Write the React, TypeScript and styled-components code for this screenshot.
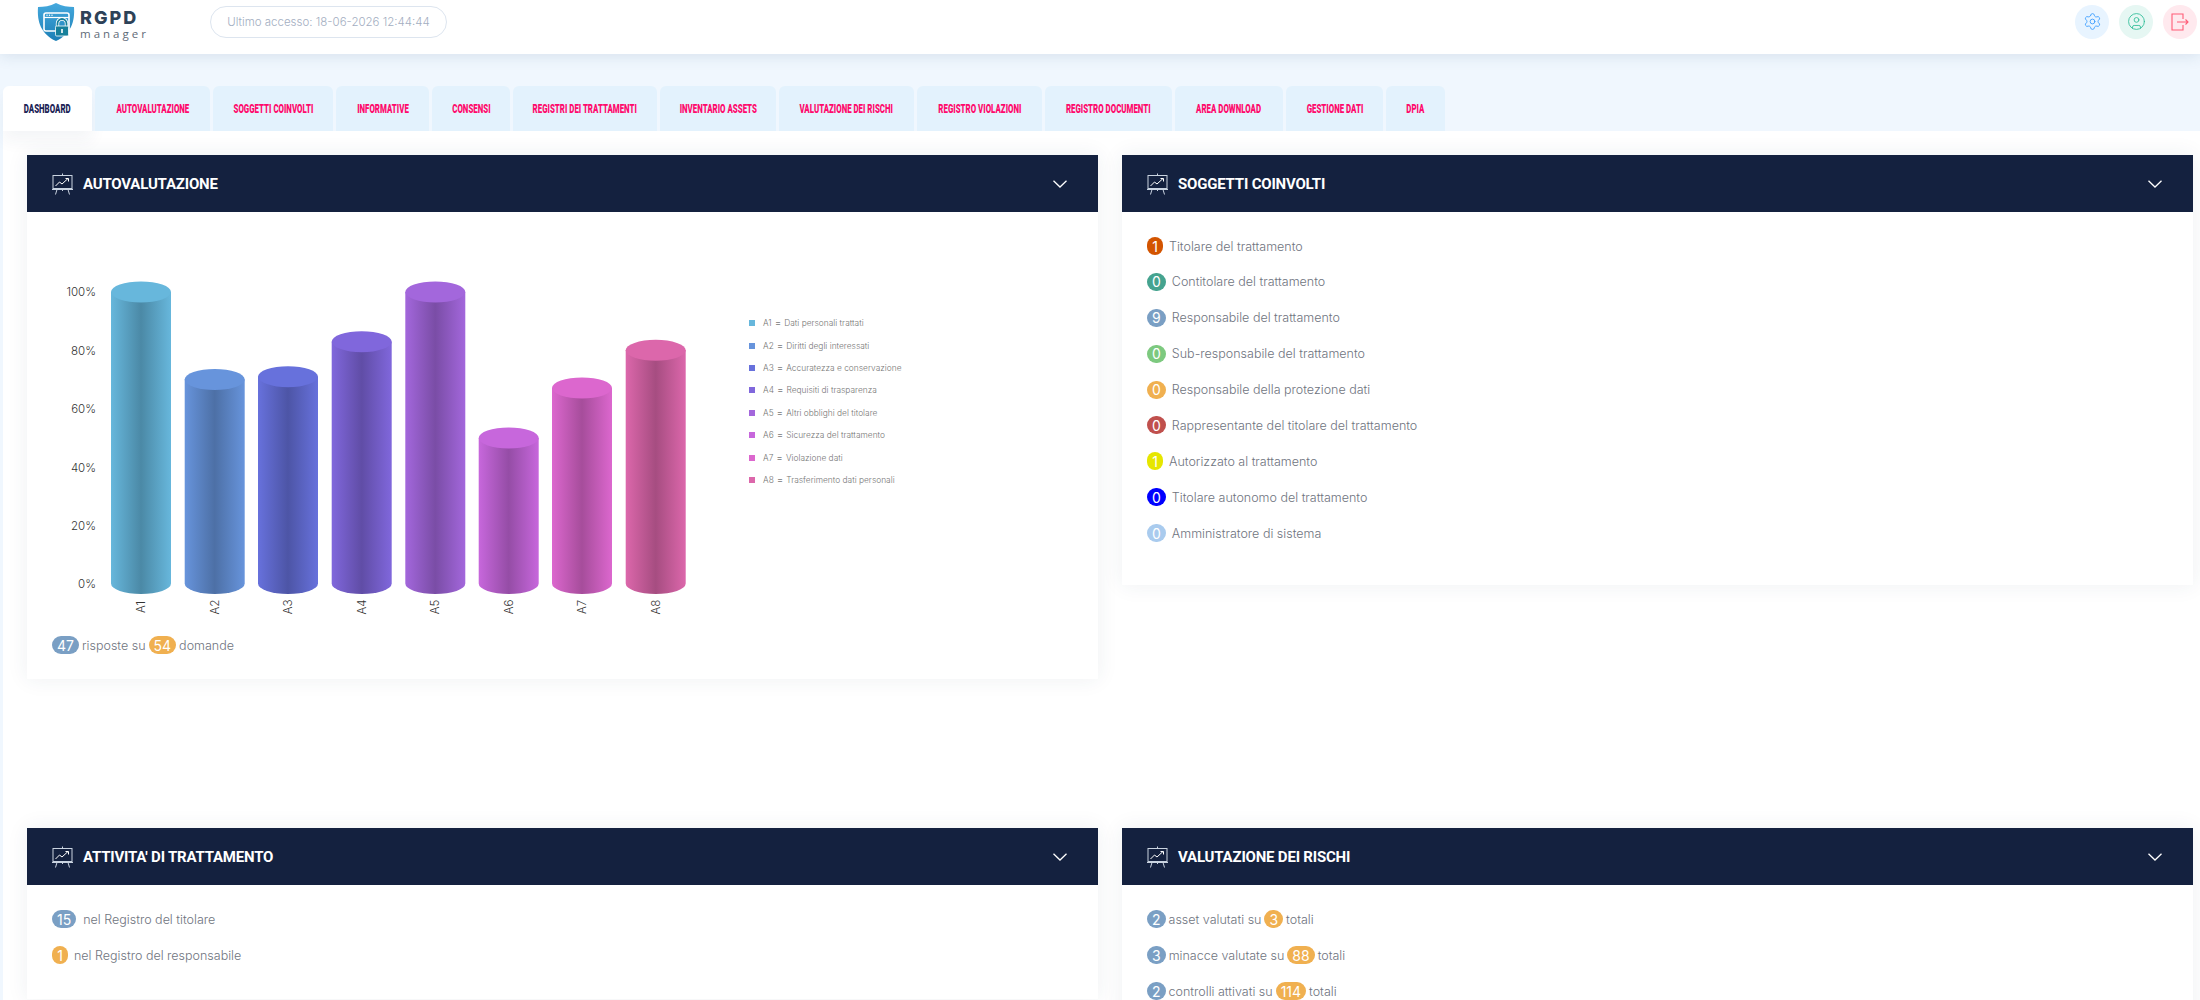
import styled, { createGlobalStyle } from "styled-components";
import { Settings, CircleUser } from "lucide-react";

const GlobalStyle = createGlobalStyle`
  html, body {
    margin: 0;
    height: 100%;
    overflow: hidden;
    background: #f0f7fe;
    font-family: "Inter", "Liberation Sans", sans-serif;
  }
`;

const Page = styled.div`
  width: 2200px;
  height: 1000px;
  overflow: hidden;
`;

const TopBar = styled.header`
  height: 54px;
  background: #fff;
  display: flex;
  align-items: center;
  padding-left: 36px;
  box-shadow: 0 2px 14px rgba(60, 90, 130, 0.14);
  position: relative;
`;

const Brand = styled.div`
  display: flex;
  align-items: center;
  width: 174px;
  gap: 4px;
  margin-top: -10px;
`;

const BrandText = styled.div`
  display: flex;
  flex-direction: column;
  gap: 2px;
  margin-top: 4px;
`;

const BrandName = styled.span`
  font-family: "Inter", sans-serif;
  font-weight: 800;
  font-size: 18px;
  line-height: 17px;
  letter-spacing: 2px;
  color: #2d4258;
`;

const BrandSub = styled.span`
  font-family: "Open Sans", sans-serif;
  font-size: 11.5px;
  line-height: 11px;
  letter-spacing: 3px;
  color: #5f6b78;
`;

const LastAccess = styled.div`
  width: 237px;
  height: 32px;
  box-sizing: border-box;
  margin-top: -10px;
  border: 1px solid #dde5ef;
  border-radius: 16px;
  display: flex;
  align-items: center;
  justify-content: center;
  font-size: 11.5px;
  font-weight: 300;
  color: #a3aec1;
`;

const TopActions = styled.div`
  margin-left: auto;
  margin-right: 3px;
  margin-top: -11px;
  display: flex;
  gap: 10px;
`;

const ActionButton = styled.div<{ $bg: string; $fg: string }>`
  width: 34px;
  height: 34px;
  border-radius: 50%;
  background: ${(p) => p.$bg};
  color: ${(p) => p.$fg};
  display: flex;
  align-items: center;
  justify-content: center;
`;

const TabBar = styled.nav`
  display: flex;
  gap: 3px;
  padding: 32px 0 0 3px;
  height: 45px;
  position: relative;
`;

const Tab = styled.div<{ $active?: boolean; $w: number }>`
  width: ${(p) => p.$w}px;
  height: 45px;
  border-radius: 6px 6px 0 0;
  background: ${(p) => (p.$active ? "#fff" : "#e3f2fd")};
  color: ${(p) => (p.$active ? "#1d2456" : "#ff0a6c")};
  box-shadow: ${(p) => (p.$active ? "0 10px 16px rgba(40, 60, 90, 0.05)" : "none")};
  display: flex;
  align-items: center;
  justify-content: center;
`;

const TabLabel = styled.span`
  display: block;
  font-family: "Roboto", sans-serif;
  font-weight: 900;
  font-size: 12.5px;
  white-space: nowrap;
  transform: scaleX(0.63);
`;

const Content = styled.main`
  margin-left: 3px;
  background: #fff;
  height: 869px;
  box-sizing: border-box;
  padding: 24px 7px 0 24px;
  display: grid;
  grid-template-columns: 1071px 1071px;
  column-gap: 24px;
  row-gap: 149px;
  align-items: start;
`;

const Card = styled.section`
  background: #fff;
  box-shadow: 0 0 20px rgba(40, 60, 90, 0.08);
`;

const CardHead = styled.div`
  height: 57px;
  background: #14213f;
  display: flex;
  align-items: center;
  padding: 0 31px 0 25px;
  gap: 10px;
  color: #fff;
`;

const CardTitle = styled.h2`
  margin: 0;
  font-family: "Roboto", sans-serif;
  font-weight: 700;
  font-size: 15px;
  letter-spacing: -0.2px;
  flex: 1;
`;

const CardBody = styled.div<{ $pad?: string }>`
  padding: ${(p) => p.$pad || "0 25px 25px"};
`;

const ChartRow = styled.div`
  display: flex;
  margin: 48px 0 0 -25px;
`;

const Legend = styled.ul`
  list-style: none;
  margin: 52px 0 0 22px;
  padding: 0;
`;

const LegendItem = styled.li`
  height: 22.4px;
  display: flex;
  align-items: center;
  font-size: 8.4px;
  font-weight: 300;
  color: #777;
  white-space: pre;
`;

const EqualSign = styled.span`
  font-size: 10px;
  margin: 0 3px;
  transform: translateY(-1px);
`;

const Swatch = styled.i<{ $c: string }>`
  width: 6px;
  height: 6px;
  margin-right: 8px;
  background: ${(p) => p.$c};
`;

const Row = styled.div<{ $gap?: number }>`
  display: flex;
  align-items: center;
  gap: ${(p) => p.$gap ?? 3}px;
  height: 18px;
  font-size: 12.5px;
  font-weight: 300;
  color: #6f7480;
  white-space: pre;
`;

const Rows = styled.div<{ $step: number }>`
  display: flex;
  flex-direction: column;
  gap: ${(p) => p.$step}px;
`;

const Footer = styled(Row)`
  margin-top: 16px;
`;

const Badge = styled.span<{ $c: string; $tight?: boolean }>`
  height: 18px;
  min-width: 8px;
  padding: 0 ${(p) => (p.$tight ? 4 : 5)}px;
  border-radius: 9px;
  background: ${(p) => p.$c};
  color: #fff;
  display: inline-flex;
  align-items: center;
  justify-content: center;
  font-size: 14px;
  font-weight: 400;
`;

const BLUE = "#7a9fc4";
const ORANGE = "#f0b050";

const tabs: [string, number][] = [
  ["DASHBOARD", 89],
  ["AUTOVALUTAZIONE", 115],
  ["SOGGETTI COINVOLTI", 120],
  ["INFORMATIVE", 93],
  ["CONSENSI", 78],
  ["REGISTRI DEI TRATTAMENTI", 144],
  ["INVENTARIO ASSETS", 116],
  ["VALUTAZIONE DEI RISCHI", 135],
  ["REGISTRO VIOLAZIONI", 125],
  ["REGISTRO DOCUMENTI", 127],
  ["AREA DOWNLOAD", 108],
  ["GESTIONE DATI", 97],
  ["DPIA", 59],
];

const bars = [
  { id: "A1", x: 111, top: 292, c: "#67b7dc", d: "#4b89a6", label: "Dati personali trattati" },
  { id: "A2", x: 184.7, top: 379.5, c: "#6794dc", d: "#4d70a6", label: "Diritti degli interessati" },
  { id: "A3", x: 258, top: 376.7, c: "#6771dc", d: "#4d55a6", label: "Accuratezza e conservazione" },
  { id: "A4", x: 331.7, top: 341.7, c: "#8067dc", d: "#604da6", label: "Requisiti di trasparenza" },
  { id: "A5", x: 405.3, top: 292, c: "#a367dc", d: "#7a4da6", label: "Altri obblighi del titolare" },
  { id: "A6", x: 478.7, top: 438, c: "#c767dc", d: "#954da6", label: "Sicurezza del trattamento" },
  { id: "A7", x: 552, top: 388, c: "#dc67ce", d: "#a64d9b", label: "Violazione dati" },
  { id: "A8", x: 625.7, top: 350.3, c: "#dc67ab", d: "#a64d81", label: "Trasferimento dati personali" },
];

const axis: [string, number][] = [
  ["100%", 292],
  ["80%", 351],
  ["60%", 409],
  ["40%", 468],
  ["20%", 526],
  ["0%", 584],
];

const subjects: [string, string, string][] = [
  ["1", "#d35400", "Titolare del trattamento"],
  ["0", "#45a38f", "Contitolare del trattamento"],
  ["9", BLUE, "Responsabile del trattamento"],
  ["0", "#7dc97f", "Sub-responsabile del trattamento"],
  ["0", ORANGE, "Responsabile della protezione dati"],
  ["0", "#c0504d", "Rappresentante del titolare del trattamento"],
  ["1", "#e6e600", "Autorizzato al trattamento"],
  ["0", "#0000ff", "Titolare autonomo del trattamento"],
  ["0", "#a9cbee", "Amministratore di sistema"],
];

function Logo() {
  return (
    <svg width="40" height="40" viewBox="0 0 40 40">
      <defs>
        <linearGradient id="shield" x1="0" y1="0" x2="0" y2="1">
          <stop offset="0" stopColor="#45a9de" />
          <stop offset="1" stopColor="#1c7fb6" />
        </linearGradient>
      </defs>
      <path d="M20 1 C26 4 32 5 38 5 C39 20 35 32 20 39 C5 32 1 20 2 5 C8 5 14 4 20 1Z" fill="url(#shield)" />
      <rect x="8" y="11" width="25" height="18" rx="2" fill="none" stroke="#fff" strokeWidth="1.6" />
      <path d="M8 15.5 H33" stroke="#fff" strokeWidth="1.2" />
      <circle cx="11" cy="13.3" r=".7" fill="#fff" />
      <circle cx="13.5" cy="13.3" r=".7" fill="#fff" />
      <circle cx="16" cy="13.3" r=".7" fill="#fff" />
      <path d="M21.5 25 V21.5 a4.5 4.5 0 0 1 9 0 V25" fill="none" stroke="#fff" strokeWidth="3.4" />
      <path d="M21.5 25 V21.5 a4.5 4.5 0 0 1 9 0 V25" fill="none" stroke="#17809b" strokeWidth="1.8" />
      <rect x="19.5" y="24" width="13" height="10" rx="1.2" fill="#17809b" stroke="#fff" strokeWidth=".8" />
      <rect x="25.2" y="27" width="1.6" height="4" fill="#fff" />
    </svg>
  );
}

function LogoutIcon() {
  return (
    <svg width="18" height="18" viewBox="0 0 18 18" fill="none" stroke="currentColor" strokeWidth="1.1">
      <path d="M12 6 V1 H1 V17 H12 V12" />
      <path d="M6 9 H17 M14.5 6.5 L17 9 L14.5 11.5" />
    </svg>
  );
}

function BoardIcon() {
  return (
    <svg width="21" height="22" viewBox="0 0 21 22" fill="none" stroke="#c9d3e0" strokeWidth="1">
      <path d="M10.5 0.5 V2.5" />
      <rect x="1" y="2.5" width="19" height="13" />
      <path d="M0 16.5 H21" />
      <path d="M5 16.5 L3.5 21.5 M16 16.5 L17.5 21.5 M10.5 16.5 V18" />
      <path d="M3.5 13 L7.5 9 L10 11 L16 5.5 M13.5 5.5 H16.5 V8.5" stroke="#fff" />
    </svg>
  );
}

function Chevron() {
  return (
    <svg width="14" height="8" viewBox="0 0 14 8" fill="none" stroke="#fff" strokeWidth="1.3">
      <path d="M0.5 0.8 L7 7 L13.5 0.8" />
    </svg>
  );
}

function Cylinders() {
  const w = 60;
  const ry = 10.5;
  const bottom = 583.5;
  return (
    <svg width="700" height="360" viewBox="27 260 700 360">
      <defs>
        {bars.map((b) => (
          <linearGradient key={b.id} id={`grad-${b.id}`} x1="0" y1="0" x2="1" y2="0">
            <stop offset="0" stopColor={b.c} />
            <stop offset="0.5" stopColor={b.d} />
            <stop offset="1" stopColor={b.c} />
          </linearGradient>
        ))}
      </defs>
      {axis.map(([t, y]) => (
        <text key={t} x="96" y={y + 4} textAnchor="end" fontSize="11.5" fontWeight="300" fill="#333">
          {t}
        </text>
      ))}
      {bars.map((b) => (
        <g key={b.id}>
          <path
            d={`M${b.x} ${b.top} V${bottom} A${w / 2} ${ry} 0 0 0 ${b.x + w} ${bottom} V${b.top} Z`}
            fill={`url(#grad-${b.id})`}
          />
          <ellipse cx={b.x + w / 2} cy={b.top} rx={w / 2} ry={ry} fill={b.c} />
          <text
            transform={`translate(${b.x + 34} 607) rotate(-90)`}
            textAnchor="middle"
            fontSize="11.5"
            fontWeight="300"
            fill="#333"
          >
            {b.id}
          </text>
        </g>
      ))}
    </svg>
  );
}

function Panel({ title, children }: { title: string; children: React.ReactNode }) {
  return (
    <Card>
      <CardHead>
        <BoardIcon />
        <CardTitle>{title}</CardTitle>
        <Chevron />
      </CardHead>
      {children}
    </Card>
  );
}

export default function App() {
  return (
    <Page>
      <GlobalStyle />
      <TopBar>
        <Brand>
          <Logo />
          <BrandText>
            <BrandName>RGPD</BrandName>
            <BrandSub>manager</BrandSub>
          </BrandText>
        </Brand>
        <LastAccess>Ultimo accesso: 18-06-2026 12:44:44</LastAccess>
        <TopActions>
          <ActionButton $bg="#e8f4ff" $fg="#3b9dff">
            <Settings size={19} strokeWidth={1.1} />
          </ActionButton>
          <ActionButton $bg="#e6f7f3" $fg="#30bd98">
            <CircleUser size={19} strokeWidth={1.1} />
          </ActionButton>
          <ActionButton $bg="#ffe9ee" $fg="#ff5c77">
            <LogoutIcon />
          </ActionButton>
        </TopActions>
      </TopBar>

      <TabBar>
        {tabs.map(([name, w], i) => (
          <Tab key={name} $w={w} $active={i === 0}>
            <TabLabel>{name}</TabLabel>
          </Tab>
        ))}
      </TabBar>

      <Content>
        <Panel title="AUTOVALUTAZIONE">
          <CardBody>
            <ChartRow>
              <Cylinders />
              <Legend>
                {bars.map((b) => (
                  <LegendItem key={b.id}>
                    <Swatch $c={b.c} />
                    {b.id}
                    <EqualSign>=</EqualSign>
                    {b.label}
                  </LegendItem>
                ))}
              </Legend>
            </ChartRow>
            <Footer>
              <Badge $c={BLUE}>47</Badge>
              risposte su
              <Badge $c={ORANGE}>54</Badge>
              domande
            </Footer>
          </CardBody>
        </Panel>

        <Panel title="SOGGETTI COINVOLTI">
          <CardBody $pad="25px 25px 43px">
            <Rows $step={17.9}>
              {subjects.map(([n, c, label]) => (
                <Row key={label} $gap={6}>
                  <Badge $c={c} $tight={n === "1"}>
                    {n}
                  </Badge>
                  {label}
                </Row>
              ))}
            </Rows>
          </CardBody>
        </Panel>

        <Panel title="ATTIVITA' DI TRATTAMENTO">
          <CardBody $pad="25px 25px 35px">
            <Rows $step={18}>
              <Row $gap={7}>
                <Badge $c={BLUE}>15</Badge>
                nel Registro del titolare
              </Row>
              <Row $gap={6}>
                <Badge $c={ORANGE} $tight>
                  1
                </Badge>
                nel Registro del responsabile
              </Row>
            </Rows>
          </CardBody>
        </Panel>

        <Panel title="VALUTAZIONE DEI RISCHI">
          <CardBody $pad="25px 25px 35px">
            <Rows $step={18}>
              <Row>
                <Badge $c={BLUE}>2</Badge>
                asset valutati su
                <Badge $c={ORANGE}>3</Badge>
                totali
              </Row>
              <Row>
                <Badge $c={BLUE}>3</Badge>
                minacce valutate su
                <Badge $c={ORANGE}>88</Badge>
                totali
              </Row>
              <Row>
                <Badge $c={BLUE}>2</Badge>
                controlli attivati su
                <Badge $c={ORANGE}>114</Badge>
                totali
              </Row>
            </Rows>
          </CardBody>
        </Panel>
      </Content>
    </Page>
  );
}
